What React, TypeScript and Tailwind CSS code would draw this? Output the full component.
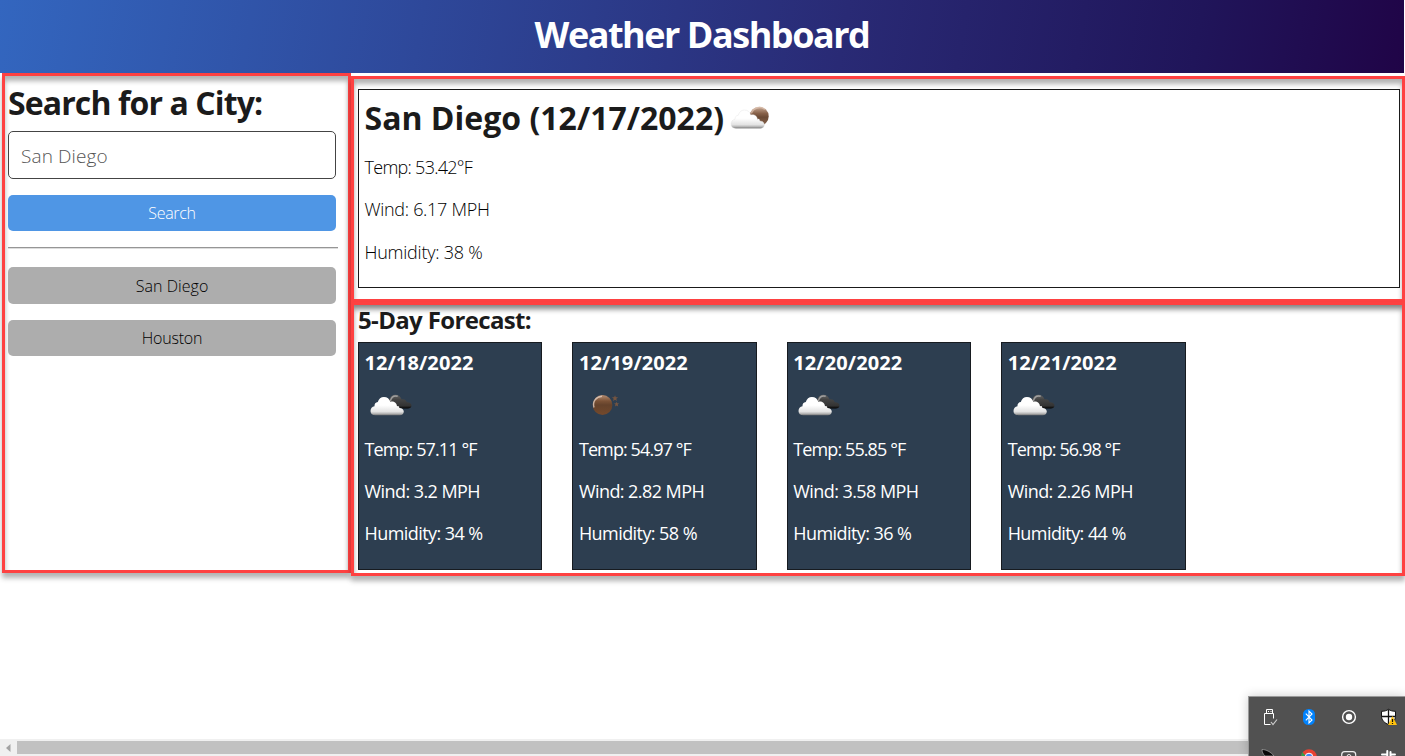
import React from "react";

const forecast = [
  { date: "12/18/2022", night: false, temp: "57.11", wind: "3.2", humidity: "34" },
  { date: "12/19/2022", night: true, temp: "54.97", wind: "2.82", humidity: "58" },
  { date: "12/20/2022", night: false, temp: "55.85", wind: "3.58", humidity: "36" },
  { date: "12/21/2022", night: false, temp: "56.98", wind: "2.26", humidity: "44" },
];

const panel =
  "border-[3px] border-[#fe4141] shadow-[0_5px_5px_rgba(0,0,0,0.3),inset_0_5px_5px_rgba(0,0,0,0.3)]";

function Gradients() {
  return (
    <svg className="absolute size-0" aria-hidden="true">
      <defs>
        <linearGradient id="cloud" x1="0" y1="0" x2="0" y2="1">
          <stop offset="0.45" stopColor="#ffffff" />
          <stop offset="0.8" stopColor="#e3e3e3" />
          <stop offset="0.9" stopColor="#b9b9b9" />
          <stop offset="1" stopColor="#777777" />
        </linearGradient>
        <linearGradient id="dark" x1="0" y1="0" x2="0" y2="1">
          <stop offset="0" stopColor="#666666" />
          <stop offset="0.35" stopColor="#444444" />
          <stop offset="0.8" stopColor="#333333" />
          <stop offset="1" stopColor="#000000" />
        </linearGradient>
        <linearGradient id="moon" x1="0" y1="0" x2="0" y2="1">
          <stop offset="0" stopColor="#b58d72" />
          <stop offset="0.3" stopColor="#7b5236" />
          <stop offset="0.5" stopColor="#64422b" />
          <stop offset="1" stopColor="#74492c" />
        </linearGradient>
        <linearGradient id="paleMoon" x1="0" y1="0" x2="0" y2="1">
          <stop offset="0" stopColor="#c9ab97" />
          <stop offset="0.35" stopColor="#876149" />
          <stop offset="0.55" stopColor="#6b4a35" />
          <stop offset="1" stopColor="#8a6750" />
        </linearGradient>
      </defs>
    </svg>
  );
}

const cloudPath =
  "M5.5 27.7C2.3 27.7 .5 25.8 .5 23.3C.5 20.8 2.1 19 4.5 18.6C4.2 16.6 5.7 14.6 7.8 14.5C8.7 11.2 11 9.3 13.9 9.3C17.2 9.3 19.6 11.3 20.3 14.2C23.5 13.2 26.8 15.2 27 18.8C28 17.9 29.5 18.7 29.3 20.3C32 20.3 33.8 21.8 33.8 24C33.8 26.2 32.2 27.7 29.8 27.7Z";

function BrokenClouds() {
  return (
    <svg className="block" width="50" height="32" viewBox="0 0 50 32">
      <g transform="translate(5 -.4)">
        <path
          fill="url(#dark)"
          d="M18 16C18.4 11 21.4 7.1 25.1 7.1C28.2 7.1 30.7 9.1 31.5 11.7C34.5 11 36.6 12.8 36.7 14.7C39.3 14.4 41.5 15.8 41.5 18C41.5 20 40 21 37.8 21H27Z"
        />
        <path d="M20.3 13.3C21.5 9.6 24.4 7.7 27.7 8.7" fill="none" stroke="#b2b2b2" strokeWidth="1.5" opacity=".8" />
        <path fill="url(#cloud)" d={cloudPath} />
      </g>
    </svg>
  );
}

function CloudMoon() {
  return (
    <svg className="block" width="42" height="28" viewBox="0 0 42 28">
      <circle cx="29.2" cy="12.3" r="9.5" fill="url(#paleMoon)" />
      <path d="M21.2 9.4C23.4 3.7 30 1.7 35 5.4" fill="none" stroke="#e2c8b7" strokeWidth="1.7" opacity=".65" />
      <g transform="translate(.5 -3.3)">
        <path d={cloudPath} fill="url(#cloud)" stroke="#dddddd" strokeWidth=".35" />
      </g>
    </svg>
  );
}

function ClearNight() {
  return (
    <svg className="block" width="50" height="32" viewBox="0 0 50 32">
      <circle cx="23.5" cy="17" r="9.9" fill="url(#moon)" />
      <path d="M15 19.5C13.2 13.5 17 8.8 23 8.3" fill="none" stroke="#e4cec0" strokeWidth="1.4" opacity=".8" />
      <path
        fill="#765540"
        d="M36 7.2l.8 2 2.3.1-1.8 1.4.6 2.2-1.9-1.2-2 1.2.7-2.2-1.8-1.4 2.3-.1zM37.6 13.8l.7 1.5 1.8.1-1.4 1.2.5 1.8-1.6-1-1.6 1 .5-1.8-1.5-1.2 1.9-.1z"
      />
    </svg>
  );
}

function SearchPanel() {
  return (
    <aside className={`h-[500px] w-[349px] shrink-0 pl-[3px] pt-[7px] ${panel}`}>
      <h2 className="whitespace-nowrap text-[32px] font-bold leading-[40px] tracking-[-0.89px] text-[#1b1b1b]">
        Search for a City:
      </h2>
      <input
        className="mt-2 block h-12 w-[328px] rounded-[5px] border border-[#444] bg-white px-3 pt-0.5 text-[19px] font-light tracking-[0.1px] outline-none placeholder:text-[#555]"
        placeholder="San Diego"
      />
      <button className="mt-4 block h-9 w-[328px] rounded-[5px] bg-[#4f96e5] text-base font-light leading-[37px] tracking-[-0.3px] text-white">
        Search
      </button>
      <hr className="mb-[18px] mt-4 w-[330px] border-t border-[#969696] shadow-[0_1px_0_#dddddd]" />
      <div className="pt-px">
        <button className="block h-[37px] w-[328px] rounded-[5px] bg-[#adadad] text-base font-light leading-9 tracking-[0.05px] text-black">
          San Diego
        </button>
        <button className="mt-4 block h-9 w-[328px] rounded-[5px] bg-[#adadad] text-base font-light leading-9 tracking-[-0.2px] text-black">
          Houston
        </button>
      </div>
    </aside>
  );
}

function CurrentWeather() {
  return (
    <section className={`h-[226px] pl-1 pr-[2px] pt-[10px] ${panel}`}>
      <div className="h-[199px] border border-[#1a1a1a] bg-white pl-[5.5px] pt-2">
        <div className="flex h-10 items-center">
          <h2 className="whitespace-nowrap text-[32px] font-bold leading-[40px] tracking-[0.01px] text-[#1b1b1b]">
            San Diego (12/17/2022)
          </h2>
          <div className="ml-1.5">
            <CloudMoon />
          </div>
        </div>
        <div className="mt-2 whitespace-nowrap text-lg font-light text-black">
          <p className="leading-[42px] tracking-[-0.72px]">Temp: 53.42°F</p>
          <p className="leading-[42px] tracking-[-0.3px]">Wind: 6.17 MPH</p>
          <p className="leading-[44px] tracking-[-0.24px]">Humidity: 38 %</p>
        </div>
      </div>
    </section>
  );
}

function Forecast() {
  return (
    <section className={`h-[274px] pl-1 ${panel}`}>
      <h3 className="whitespace-nowrap pb-[7px] text-2xl font-bold leading-[30px] tracking-[-0.65px] text-[#1b1b1b]">
        5-Day Forecast:
      </h3>
      <div className="flex gap-[30px]">
        {forecast.map((day) => (
          <article
            key={day.date}
            className="h-[228px] w-[184.4px] whitespace-nowrap border border-[#171b20] bg-[#2d3e50] pl-[5.5px] pt-[5px] text-white"
          >
            <h4 className="text-xl font-bold leading-[30px] tracking-[0.1px]">{day.date}</h4>
            <div className="mb-2 mt-[10px]">{day.night ? <ClearNight /> : <BrokenClouds />}</div>
            <div className="text-lg leading-[42px]">
              <p className="tracking-[-0.9px]">Temp: {day.temp} °F</p>
              <p className="tracking-[-0.57px]">Wind: {day.wind} MPH</p>
              <p className="tracking-[-0.57px]">Humidity: {day.humidity} %</p>
            </div>
          </article>
        ))}
      </div>
    </section>
  );
}

function SystemTray() {
  return (
    <div className="absolute bottom-0 right-0 h-[60px] w-[157px] overflow-hidden border-l border-t border-[#999] bg-[#515151] shadow-[0_0_10px_rgba(0,0,0,0.2)]">
      <svg className="block" width="156" height="59" viewBox="1249 697 156 59">
        <g fill="none" stroke="#fff" strokeWidth="1">
          <path d="M1266.5 713.5v-4h6v4M1264.5 713.5h9v5M1264.5 713.5v11h6" />
          <path d="M1268 711.5h1M1270.500 711.500h1" />
          <path d="M1271 722l2 2.500 4-5" stroke="#ccc" strokeWidth="1.200" />
        </g>
        <rect x="1303" y="709" width="12" height="16" rx="5.500" fill="#0082fc" />
        <path d="M1305.800 713.700l6.200 6.300-3 3v-12l3 3-6.200 6.300" fill="none" stroke="#fff" strokeWidth="1.100" />
        <circle cx="1349" cy="717" r="6.400" fill="none" stroke="#fff" strokeWidth="1.400" />
        <circle cx="1349" cy="717" r="3.200" fill="#fff" />
        <path d="M1388.500 709.300c2 1.500 4.500 2 7 2v5c0 4-3 6.500-7 8.400c-4-1.900-7-4.400-7-8.400v-5c2.500 0 5-.5 7-2z" fill="#fff" stroke="#111" />
        <path d="M1388.500 709.500v15M1381.500 716.500h14" stroke="#111" strokeWidth="1.300" />
        <path d="M1392.500 716l4.500 9h-9z" fill="#ffc20e" />
        <path d="M1392.500 719v3M1392.500 723v1" stroke="#111" strokeWidth="1.200" />
        <path d="M1262 749.500c4 0 9 2.500 12 6.500h-9c-2-2-3-4-3-6.500z" fill="#080808" stroke="#bbb" strokeWidth=".6" />
        <circle cx="1309" cy="757" r="7.800" fill="#e74133" />
        <path d="M1301.300 756c0-1.500.3-2.500 1-3.800l3.500 3.800z" fill="#2ba24c" />
        <circle cx="1309" cy="757" r="3.800" fill="#4285f4" stroke="#fff" />
        <rect x="1341.700" y="751.700" width="14" height="14" rx="3" fill="none" stroke="#eee" strokeWidth="1.200" />
        <circle cx="1349" cy="756.500" r="2" fill="none" stroke="#eee" />
        <path d="M1387.300 751v5M1390.500 752v4M1382 754.500h4M1392 754.500h3" stroke="#fff" strokeWidth="2" strokeLinecap="round" />
      </svg>
    </div>
  );
}

export default function App() {
  return (
    <div className="relative flex h-[756px] w-[1405px] flex-col overflow-hidden bg-white font-['Open_Sans','Noto_Sans',sans-serif]">
      <Gradients />
      <header className="h-[73px] w-[1404px] shrink-0 bg-[linear-gradient(100deg,#3366bf_0%,#292a75_60%,#20155a_85%,#200447_100%)]">
        <h1 className="text-center text-4xl font-bold leading-[69px] tracking-[-1.48px] text-white">
          Weather Dashboard
        </h1>
      </header>
      <main className="flex grow items-start pl-0.5">
        <SearchPanel />
        <div className="mt-[3px] grow">
          <CurrentWeather />
          <Forecast />
        </div>
      </main>
      <footer className="flex h-[17px] shrink-0 items-center bg-[#f0f0f0]">
        <div className="flex w-[17px] justify-center">
          <svg width="5" height="8" viewBox="0 0 5 8">
            <path d="M4.500 0v8L0 4z" fill="#a3a3a3" />
          </svg>
        </div>
        <div className="h-[13px] grow bg-[#c1c1c1]" />
      </footer>
      <SystemTray />
    </div>
  );
}
